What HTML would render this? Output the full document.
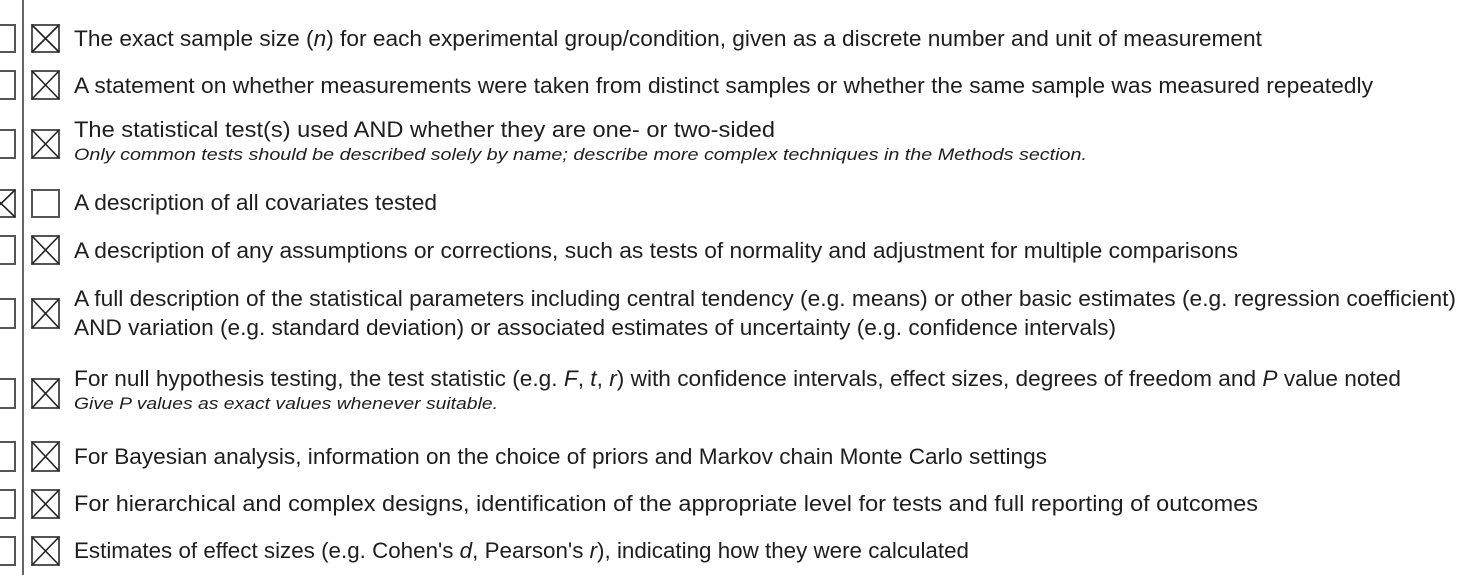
<!DOCTYPE html>
<html><head><meta charset="utf-8"><style>
html,body{margin:0;padding:0;background:#fff;width:1467px;height:575px;overflow:hidden}
svg{display:block}
text{font-family:"Liberation Sans",sans-serif;fill:#1e1e1e}
.m{font-size:22px}
.i{font-size:17px;font-style:italic}
</style></head><body>
<svg width="1467" height="575" viewBox="0 0 1467 575" xmlns="http://www.w3.org/2000/svg">
<line x1="23" y1="0" x2="23" y2="575" stroke="#666" stroke-width="2"/>
<g fill="none" stroke="#555" stroke-width="2">
<rect x="-13" y="25" width="28" height="27"/><rect x="32" y="25" width="27" height="27"/>
<rect x="-13" y="71" width="28" height="28"/><rect x="32" y="71" width="27" height="28"/>
<rect x="-13" y="130" width="28" height="28"/><rect x="32" y="130" width="27" height="28"/>
<rect x="-13" y="190" width="28" height="27"/><rect x="32" y="190" width="27" height="27"/>
<rect x="-13" y="236" width="28" height="28"/><rect x="32" y="236" width="27" height="28"/>
<rect x="-13" y="299" width="28" height="29"/><rect x="32" y="299" width="27" height="29"/>
<rect x="-13" y="379" width="28" height="29"/><rect x="32" y="379" width="27" height="29"/>
<rect x="-13" y="442" width="28" height="29"/><rect x="32" y="442" width="27" height="29"/>
<rect x="-13" y="490" width="28" height="28"/><rect x="32" y="490" width="27" height="28"/>
<rect x="-13" y="537" width="28" height="28"/><rect x="32" y="537" width="27" height="28"/>
</g>
<g stroke="#222" stroke-width="1.6">
<path d="M32 25L59 52M59 25L32 52"/>
<path d="M32 71L59 99M59 71L32 99"/>
<path d="M32 130L59 158M59 130L32 158"/>
<path d="M-13 190L15 217M15 190L-13 217"/>
<path d="M32 236L59 264M59 236L32 264"/>
<path d="M32 299L59 328M59 299L32 328"/>
<path d="M32 379L59 408M59 379L32 408"/>
<path d="M32 442L59 471M59 442L32 471"/>
<path d="M32 490L59 518M59 490L32 518"/>
<path d="M32 537L59 565M59 537L32 565"/>
</g>
<text class="m" x="74" y="46" textLength="1188" lengthAdjust="spacingAndGlyphs">The exact sample size (<tspan font-style="italic">n</tspan>) for each experimental group/condition, given as a discrete number and unit of measurement</text>
<text class="m" x="74" y="93" textLength="1299" lengthAdjust="spacingAndGlyphs">A statement on whether measurements were taken from distinct samples or whether the same sample was measured repeatedly</text>
<text class="m" x="74" y="137" textLength="701" lengthAdjust="spacingAndGlyphs">The statistical test(s) used AND whether they are one- or two-sided</text>
<text class="i" x="74" y="160" textLength="1013" lengthAdjust="spacingAndGlyphs">Only common tests should be described solely by name; describe more complex techniques in the Methods section.</text>
<text class="m" x="74" y="210" textLength="363" lengthAdjust="spacingAndGlyphs">A description of all covariates tested</text>
<text class="m" x="74" y="258" textLength="1164" lengthAdjust="spacingAndGlyphs">A description of any assumptions or corrections, such as tests of normality and adjustment for multiple comparisons</text>
<text class="m" x="74" y="306" textLength="1382" lengthAdjust="spacingAndGlyphs">A full description of the statistical parameters including central tendency (e.g. means) or other basic estimates (e.g. regression coefficient)</text>
<text class="m" x="74" y="335" textLength="1042" lengthAdjust="spacingAndGlyphs">AND variation (e.g. standard deviation) or associated estimates of uncertainty (e.g. confidence intervals)</text>
<text class="m" x="74" y="386" textLength="1327" lengthAdjust="spacingAndGlyphs">For null hypothesis testing, the test statistic (e.g. <tspan font-style="italic">F</tspan>, <tspan font-style="italic">t</tspan>, <tspan font-style="italic">r</tspan>) with confidence intervals, effect sizes, degrees of freedom and <tspan font-style="italic">P</tspan> value noted</text>
<text class="i" x="74" y="409" textLength="424" lengthAdjust="spacingAndGlyphs">Give P values as exact values whenever suitable.</text>
<text class="m" x="74" y="464" textLength="973" lengthAdjust="spacingAndGlyphs">For Bayesian analysis, information on the choice of priors and Markov chain Monte Carlo settings</text>
<text class="m" x="74" y="511" textLength="1184" lengthAdjust="spacingAndGlyphs">For hierarchical and complex designs, identification of the appropriate level for tests and full reporting of outcomes</text>
<text class="m" x="74" y="558" textLength="895" lengthAdjust="spacingAndGlyphs">Estimates of effect sizes (e.g. Cohen's <tspan font-style="italic">d</tspan>, Pearson's <tspan font-style="italic">r</tspan>), indicating how they were calculated</text>
</svg>
</body></html>
